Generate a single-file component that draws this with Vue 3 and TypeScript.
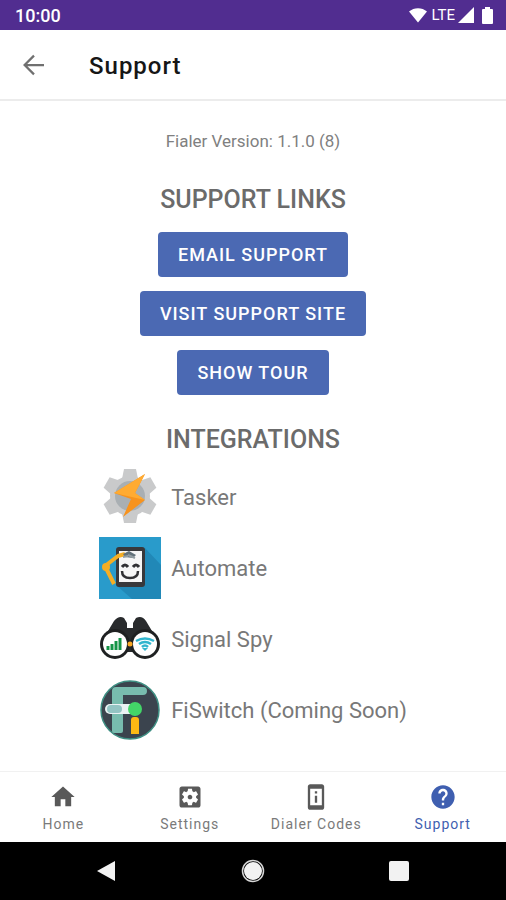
<script setup lang="ts">
import { ref } from 'vue'

interface Tab {
  label: string
  path: string
}

const links: string[] = ['Email Support', 'Visit Support Site', 'Show Tour']

const tabs: Tab[] = [
  { label: 'Home', path: 'M10 20v-6h4v6h5v-8h3L12 3 2 12h3v8z' },
  {
    label: 'Settings',
    path: 'M12 10c-1.100 0-2 .9-2 2s.9 2 2 2 2-.9 2-2-.9-2-2-2zm7-7H5c-1.110 0-2 .9-2 2v14c0 1.100.89 2 2 2h14c1.110 0 2-.9 2-2V5c0-1.100-.89-2-2-2zm-1.750 9c0 .23-.02.46-.05.68l1.480 1.160c.13.11.17.3.08.45l-1.400 2.420c-.09.15-.27.21-.43.15l-1.740-.7c-.36.28-.76.51-1.180.69l-.26 1.850c-.03.17-.18.3-.35.3h-2.800c-.17 0-.32-.13-.35-.29l-.26-1.850c-.43-.18-.82-.41-1.180-.69l-1.740.7c-.16.06-.34 0-.43-.15l-1.400-2.420c-.09-.15-.05-.34.08-.45l1.480-1.160c-.03-.23-.05-.46-.05-.69s.02-.46.05-.68l-1.480-1.160c-.13-.11-.17-.3-.08-.45l1.400-2.420c.09-.15.27-.21.43-.15l1.740.7c.36-.28.76-.51 1.180-.69l.26-1.850c.03-.17.18-.3.35-.3h2.800c.17 0 .32.13.35.29l.26 1.850c.43.18.82.41 1.180.69l1.740-.7c.16-.06.34 0 .43.15l1.400 2.420c.09.15.05.34-.08.45l-1.480 1.160c.03.23.05.46.05.69z',
  },
  {
    label: 'Dialer Codes',
    path: 'M13 7h-2v2h2V7zm0 4h-2v6h2v-6zm4-9.990L7 1c-1.100 0-2 .9-2 2v18c0 1.100.9 2 2 2h10c1.100 0 2-.9 2-2V3c0-1.100-.9-1.990-2-1.990zM17 19H7V5h10v14z',
  },
  {
    label: 'Support',
    path: 'M12 2C6.480 2 2 6.480 2 12s4.480 10 10 10 10-4.480 10-10S17.520 2 12 2zm1 17h-2v-2h2v2zm2.070-7.750l-.9.920C13.450 12.900 13 13.500 13 15h-2v-.5c0-1.100.45-2.100 1.170-2.830l1.240-1.260c.37-.36.59-.86.59-1.410 0-1.100-.9-2-2-2s-2 .9-2 2H8c0-2.210 1.790-4 4-4s4 1.790 4 4c0 .88-.36 1.680-.93 2.250z',
  },
]

const activeTab = ref<string>('Support')
</script>

<template>
  <div class="screen">
    <div class="status-bar">
      <span class="clock">10:00</span>
      <div class="status-icons">
        <svg width="20" height="16" viewBox="0 0 20 16" aria-hidden="true">
          <path d="M10 15.500 1 4.500C6 0 14 0 19 4.500z" fill="#fff" />
        </svg>
        <span class="network">LTE</span>
        <svg width="16" height="16" viewBox="0 0 16 16" aria-hidden="true">
          <path d="M0 16 16 0v16z" fill="#fff" />
        </svg>
        <svg class="battery" width="11" height="17" viewBox="0 0 11 17" aria-hidden="true">
          <path d="M3 0h5v2h2q1 0 1 1v13q0 1-1 1H1q-1 0-1-1V3q0-1 1-1h2z" fill="#fff" />
        </svg>
      </div>
    </div>

    <header class="toolbar">
      <button class="back" type="button" aria-label="Back">
        <svg width="30" height="30" viewBox="0 0 24 24" aria-hidden="true">
          <path d="M12 4.500 4.500 12l7.500 7.500M4.500 12H20" fill="none" stroke="#707070" stroke-width="1.800" />
        </svg>
      </button>
      <h1>Support</h1>
    </header>

    <main>
      <p class="version">Fialer Version: 1.1.0 (8)</p>

      <h2>Support Links</h2>
      <div class="links">
        <button v-for="link in links" :key="link" type="button" class="action">{{ link }}</button>
      </div>

      <h2 class="integrations-title">Integrations</h2>
      <ul class="integrations">
        <li>
          <svg class="logo" viewBox="0 0 62 62" aria-hidden="true">
            <g fill="#c9cacb">
              <circle cx="31" cy="30" r="20" />
              <path d="M25 3h12l2 10H23z" />
              <path d="M25 3h12l2 10H23z" transform="rotate(60 31 30)" />
              <path d="M25 3h12l2 10H23z" transform="rotate(120 31 30)" />
              <path d="M25 3h12l2 10H23z" transform="rotate(180 31 30)" />
              <path d="M25 3h12l2 10H23z" transform="rotate(240 31 30)" />
              <path d="M25 3h12l2 10H23z" transform="rotate(300 31 30)" />
            </g>
            <circle cx="31" cy="30" r="15" fill="#a9afb3" />
            <path d="M46 8 15 27l17 6-8 18 22-17-10-7z" fill="#f7931e" />
            <path d="M46 8 15 27l31 7-10-7z" fill="#ffab32" />
          </svg>
          <span>Tasker</span>
        </li>
        <li>
          <svg class="logo" viewBox="0 0 62 62" aria-hidden="true">
            <path d="M0 0h62v62H0z" fill="#299bcb" />
            <path d="m46 11 16 17v34H33L17 48z" fill="#2188b7" />
            <rect x="17" y="10" width="29" height="40" rx="3" fill="#38383b" />
            <path d="M20 14h23v31H20z" fill="#f6f6f6" />
            <path d="M26 17 19 19 6 29l9 18" fill="none" stroke="#f5ae24" stroke-width="4" stroke-linejoin="round" />
            <circle cx="7" cy="30" r="4" fill="#f5ae24" />
            <path d="m24 17 6-3 7 4-3 3-8-1z" fill="#62717a" />
            <path d="m29 18 7 3M24 20l5-1" stroke="#929da2" stroke-width="2" />
            <path d="M23 30q3-4 6 0M34 30q3-4 6 0" fill="none" stroke="#303033" stroke-width="3" />
            <path d="M23 34q0 7 8 7t8-7" fill="none" stroke="#303033" stroke-width="2.500" />
          </svg>
          <span>Automate</span>
        </li>
        <li>
          <svg class="logo" viewBox="0 0 62 62" aria-hidden="true">
            <path d="M3 33 15 13q5-6 10-3l3 5v5h6v-5l3-5q6-3 10 3l12 20-13 7H16z" fill="#292b2d" />
            <path d="M26 20h10v24H26z" fill="#292b2d" />
            <circle cx="16" cy="36" r="15" fill="#1f2122" />
            <circle cx="46" cy="36" r="15" fill="#1f2122" />
            <circle cx="16" cy="36" r="12" fill="#fff" />
            <circle cx="46" cy="36" r="12" fill="#fff" />
            <circle cx="31" cy="36" r="2.500" fill="#f9a825" />
            <path d="M9 42v-4M13 42v-6M17 42V33M21 42V30" stroke="#159447" stroke-width="3" />
            <g fill="none" stroke="#30b5ce" stroke-width="2.500">
              <path d="M37 33q9-5 18 0M40 36q6-4 12 0M43 39q3-3 6 0" />
            </g>
            <path d="M43 40h6l-3 3z" fill="#30b5ce" />
          </svg>
          <span>Signal Spy</span>
        </li>
        <li>
          <svg class="logo" viewBox="0 0 62 62" aria-hidden="true">
            <circle cx="31" cy="31" r="29" fill="#3b444e" stroke="#3e8f83" stroke-width="1.500" />
            <path d="M13 52V12q0-4 4-4h27q4 0 4 4t-4 4H24v36q0 2-2 2h-7q-2 0-2-2z" fill="#78bcae" />
            <rect x="6" y="25" width="33" height="10" rx="5" fill="#eaf2f3" />
            <rect x="8" y="26" width="15" height="8" rx="4" fill="#93c4c3" />
            <path d="M32 55V41q0-3 3-3h2q3 0 3 3v14z" fill="#fdb913" />
            <circle cx="36" cy="30" r="7" fill="#43d668" />
          </svg>
          <span>FiSwitch (Coming Soon)</span>
        </li>
      </ul>
    </main>

    <nav class="tabs" aria-label="Main">
      <button
        v-for="tab in tabs"
        :key="tab.label"
        type="button"
        class="tab"
        :class="{ active: tab.label === activeTab }"
        @click="activeTab = tab.label"
      >
        <svg width="28" height="28" viewBox="0 0 24 24" aria-hidden="true">
          <path :d="tab.path" fill="currentColor" fill-rule="evenodd" />
        </svg>
        <span>{{ tab.label }}</span>
      </button>
    </nav>

    <div class="system-bar">
      <button type="button" aria-label="System back">
        <svg width="24" height="24" viewBox="0 0 24 24" aria-hidden="true">
          <path d="M2 12 20 2v20z" fill="#f2f2f2" />
        </svg>
      </button>
      <button type="button" aria-label="System home">
        <svg width="24" height="24" viewBox="0 0 24 24" aria-hidden="true">
          <circle cx="12" cy="12" r="10.500" fill="none" stroke="#d8d8d8" stroke-width="1.500" />
          <circle cx="12" cy="12" r="9" fill="#f2f2f2" />
        </svg>
      </button>
      <button type="button" aria-label="Recent apps">
        <svg width="24" height="24" viewBox="0 0 24 24" aria-hidden="true">
          <rect x="2" y="2" width="20" height="20" rx="2" fill="#f2f2f2" />
        </svg>
      </button>
    </div>
  </div>
</template>

<style>
body {
  margin: 0;
}
</style>

<style scoped>
.screen {
  display: flex;
  flex-direction: column;
  min-height: 100vh;
  background: #fff;
  color: #6b6b6b;
  font-family: Roboto, "Liberation Sans", sans-serif;
}

button {
  margin: 0;
  padding: 0;
  border: 0;
  background: none;
  color: inherit;
  font-family: inherit;
  cursor: pointer;
}

svg {
  display: block;
}

.status-bar {
  display: flex;
  align-items: center;
  justify-content: space-between;
  height: 30px;
  padding: 0 13px 0 15px;
  background: #512d90;
  color: #fff;
}

.clock {
  font-size: 18px;
  font-weight: 500;
}

.status-icons {
  display: flex;
  align-items: center;
  gap: 3px;
}

.network {
  font-size: 15px;
}

.battery {
  margin-left: 5px;
}

.toolbar {
  display: flex;
  align-items: center;
  gap: 40px;
  height: 69px;
  padding: 0 19px;
  border-bottom: 2px solid #ececec;
}

.toolbar h1 {
  margin: 0;
  padding-top: 2px;
  color: #161616;
  font-size: 24px;
  font-weight: 500;
  line-height: 32px;
  letter-spacing: 1px;
}

main {
  display: flex;
  flex: 1;
  flex-direction: column;
  align-items: center;
  padding-top: 28px;
}

.version {
  margin: 0 0 31px;
  color: #808080;
  font-size: 17px;
  line-height: 24px;
}

h2 {
  margin: 0;
  font-size: 25px;
  font-weight: 500;
  line-height: 32px;
  text-transform: uppercase;
}

.links {
  display: flex;
  flex-direction: column;
  align-items: center;
  gap: 14px;
  padding-top: 16px;
}

.action {
  height: 45px;
  padding: 0 20px;
  border-radius: 4px;
  background: #4b69b3;
  color: #fff;
  font-size: 18px;
  font-weight: 500;
  letter-spacing: 1px;
  text-transform: uppercase;
}

.integrations-title {
  margin-top: 29px;
}

.integrations {
  display: grid;
  gap: 9px;
  margin: 0;
  padding: 10px 0 0;
  list-style: none;
}

.integrations li {
  display: flex;
  align-items: center;
  gap: 10px;
  color: #787878;
  font-size: 22px;
}

.logo {
  width: 62px;
  height: 62px;
}

.tabs {
  display: grid;
  grid-template-columns: repeat(4, 1fr);
  height: 70px;
  border-top: 1px solid #f1f1f1;
}

.tab {
  display: flex;
  flex-direction: column;
  align-items: center;
  justify-content: center;
  gap: 4px;
  padding-top: 2px;
  color: #595959;
  font-size: 14px;
  line-height: 18px;
  letter-spacing: 1px;
}

.tab span {
  color: #7a7a7a;
}

.tab.active,
.tab.active span {
  color: #3f5fb0;
}

.system-bar {
  display: grid;
  grid-template-columns: repeat(3, 146px);
  justify-content: center;
  height: 58px;
  background: #000;
}

.system-bar button {
  display: grid;
  place-items: center;
}
</style>
